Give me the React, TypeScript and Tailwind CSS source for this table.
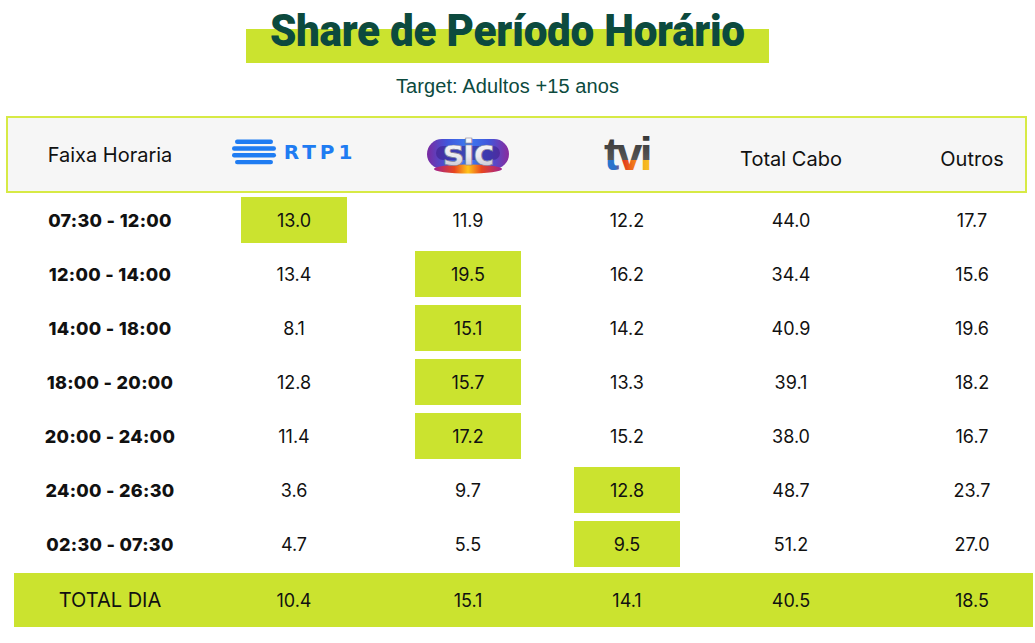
import React from "react";

const LIME = "bg-[#cbe32f]";

const rows = [
  { time: "07:30 - 12:00", vals: ["13.0", "11.9", "12.2", "44.0", "17.7"], hl: 0 },
  { time: "12:00 - 14:00", vals: ["13.4", "19.5", "16.2", "34.4", "15.6"], hl: 1 },
  { time: "14:00 - 18:00", vals: ["8.1", "15.1", "14.2", "40.9", "19.6"], hl: 1 },
  { time: "18:00 - 20:00", vals: ["12.8", "15.7", "13.3", "39.1", "18.2"], hl: 1 },
  { time: "20:00 - 24:00", vals: ["11.4", "17.2", "15.2", "38.0", "16.7"], hl: 1 },
  { time: "24:00 - 26:30", vals: ["3.6", "9.7", "12.8", "48.7", "23.7"], hl: 2 },
  { time: "02:30 - 07:30", vals: ["4.7", "5.5", "9.5", "51.2", "27.0"], hl: 2 },
];

const totals = ["10.4", "15.1", "14.1", "40.5", "18.5"];

const cols = "grid grid-cols-[192px_176px_172px_146px_182px_1fr]";

const RtpLogo = () => (
  <div className="flex items-center gap-[6px]">
    <svg width="46" height="26" viewBox="0 0 46 26">
      <rect x="3" y="0.5" width="38" height="4.4" rx="2.2" fill="#1f7cf2" />
      <rect x="0" y="7.3" width="44" height="4.4" rx="2.2" fill="#1f7cf2" />
      <rect x="0" y="14.1" width="44" height="4.4" rx="2.2" fill="#1f7cf2" />
      <rect x="3" y="20.9" width="38" height="4.4" rx="2.2" fill="#1f7cf2" />
    </svg>
    <span className="font-['DejaVu_Sans',sans-serif] text-[20px] font-bold leading-none tracking-[4px] text-[#1f7cf2]">
      RTP1
    </span>
  </div>
);

const SicLogo = () => (
  <svg width="84" height="42" viewBox="0 0 84 42">
    <defs>
      <linearGradient id="sicRing" x1="0" y1="0" x2="1" y2="0">
        <stop offset="0" stopColor="#7a2aa0" />
        <stop offset="0.25" stopColor="#4057dc" />
        <stop offset="0.5" stopColor="#3d7bf0" />
        <stop offset="0.75" stopColor="#4057dc" />
        <stop offset="1" stopColor="#8a2a9c" />
      </linearGradient>
      <linearGradient id="sicFire" x1="0" y1="0" x2="1" y2="0">
        <stop offset="0" stopColor="#a0208f" />
        <stop offset="0.3" stopColor="#e8461f" />
        <stop offset="0.5" stopColor="#ffc41a" />
        <stop offset="0.7" stopColor="#e8461f" />
        <stop offset="1" stopColor="#a0208f" />
      </linearGradient>
      <linearGradient id="sicLetters" x1="0" y1="0" x2="0" y2="1">
        <stop offset="0" stopColor="#ffffff" />
        <stop offset="0.6" stopColor="#e9e9ee" />
        <stop offset="1" stopColor="#b4b4c2" />
      </linearGradient>
    </defs>
    <rect x="1" y="7" width="82" height="30" rx="15" fill="url(#sicRing)" />
    <ellipse cx="42" cy="37" rx="34" ry="4.5" fill="url(#sicFire)" />
    <rect x="10" y="14" width="64" height="14" rx="7" fill="#3a1d86" opacity="0.55" />
    <text
      x="42"
      y="33"
      textAnchor="middle"
      fontFamily="'DejaVu Sans', sans-serif"
      fontWeight="bold"
      fontSize="36"
      letterSpacing="-1.5"
      fill="url(#sicLetters)"
      stroke="#7d7d95"
      strokeWidth="0.7"
    >
      sic
    </text>
  </svg>
);

const TviLogo = () => (
  <svg width="56" height="54" viewBox="0 0 56 54">
    <defs>
      <linearGradient id="tviGray" x1="0" y1="0" x2="0" y2="1">
        <stop offset="0" stopColor="#2c2c2c" />
        <stop offset="1" stopColor="#565656" />
      </linearGradient>
      <linearGradient id="tviColor" x1="0" y1="0" x2="1" y2="0">
        <stop offset="0" stopColor="#1e7fd8" />
        <stop offset="0.3" stopColor="#2f6fc8" />
        <stop offset="0.42" stopColor="#e0331f" />
        <stop offset="0.62" stopColor="#f17a1a" />
        <stop offset="0.82" stopColor="#f6b520" />
        <stop offset="1" stopColor="#f8cf2a" />
      </linearGradient>
      <pattern id="tviFill" patternUnits="userSpaceOnUse" x="0" y="0" width="56" height="54">
        <rect x="0" y="0" width="56" height="33" fill="url(#tviGray)" />
        <rect x="0" y="33" width="56" height="21" fill="url(#tviColor)" />
      </pattern>
    </defs>
    <text
      x="28"
      y="43"
      textAnchor="middle"
      fontFamily="'Liberation Sans', Arial, sans-serif"
      fontWeight="bold"
      fontSize="46"
      letterSpacing="-2.5"
      fill="url(#tviFill)"
    >
      tvi
    </text>
  </svg>
);

const Cell = ({ value, highlighted, last }: { value: string; highlighted: boolean; last?: boolean }) => (
  <div className={`flex items-center justify-center ${last ? "pl-[29px]" : ""}`}>
    {highlighted ? (
      <div className={`flex h-[46px] w-[106px] items-center justify-center ${LIME}`}>{value}</div>
    ) : (
      <span>{value}</span>
    )}
  </div>
);

export default function App() {
  return (
    <div className="h-[643px] w-[1035px] overflow-hidden bg-white font-['Inter',sans-serif] text-[18px] text-[#111111]">
      <div className="ml-[246px] w-[523px]">
        <div className="h-[63px] bg-[linear-gradient(to_bottom,transparent_29px,#cbe32f_29px)] pt-[9px] text-center">
          <h1 className="inline-block whitespace-nowrap font-['Roboto',sans-serif] text-[44px] font-black leading-none tracking-[-0.3px] text-[#0c4a3e] [transform:scaleX(0.96)]">
            Share de Período Horário
          </h1>
        </div>
        <p className="mt-[11px] text-center font-['Liberation_Sans',Arial,sans-serif] text-[20px] leading-[24px] tracking-[0.1px] text-[#0c4a3e]">
          Target: Adultos +15 anos
        </p>
      </div>

      <div className="ml-[6px] mt-[18px] h-[77px] w-[1021px] border-2 border-[#d7ea45] bg-[#f6f6f6] pl-[6px]">
        <div className={`${cols} h-full text-[20px]`}>
          <div className="flex items-center justify-center">Faixa Horaria</div>
          <div className="flex items-center justify-center pb-[6px]">
            <RtpLogo />
          </div>
          <div className="flex items-center justify-center pb-[4px]">
            <SicLogo />
          </div>
          <div className="flex items-center justify-center pb-[2px]">
            <TviLogo />
          </div>
          <div className="flex items-center justify-center pt-[8px]">Total Cabo</div>
          <div className="flex items-center justify-center pl-[37px] pt-[8px]">Outros</div>
        </div>
      </div>

      <div className="ml-[14px] w-[1019px]">
        {rows.map((row) => (
          <div key={row.time} className={`${cols} h-[54px]`}>
            <div className="flex items-center justify-center font-extrabold tracking-[0.3px]">{row.time}</div>
            {row.vals.map((v, i) => (
              <Cell key={i} value={v} highlighted={i === row.hl} last={i === 4} />
            ))}
          </div>
        ))}
        <div className={`${cols} mt-[2px] h-[54px] ${LIME}`}>
          <div className="flex items-center justify-center text-[20px]">TOTAL DIA</div>
          {totals.map((v, i) => (
            <Cell key={i} value={v} highlighted={false} last={i === 4} />
          ))}
        </div>
      </div>
    </div>
  );
}
